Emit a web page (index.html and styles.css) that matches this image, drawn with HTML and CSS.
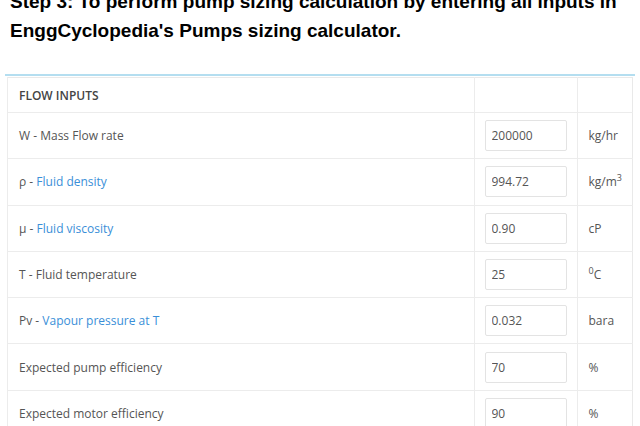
FILE: index.html
```html
<!DOCTYPE html>
<html lang="en">
  <head>
    <meta charset="UTF-8" />
    <title>Pump sizing inputs</title>
    <link rel="stylesheet" href="styles.css">
  </head>
  <body>
    <h2 class="step-title">Step 3: To perform pump sizing calculation by entering all inputs in EnggCyclopedia's Pumps sizing calculator.</h2>

    <div class="calc">
      <table class="inputs">
        <tr class="head">
          <td class="label">FLOW INPUTS</td>
          <td class="field"></td>
          <td class="unit"></td>
        </tr>
        <tr>
          <td class="label">W - Mass Flow rate</td>
          <td class="field"><input type="text" value="200000"></td>
          <td class="unit">kg/hr</td>
        </tr>
        <tr>
          <td class="label">ρ - <a href="#">Fluid density</a></td>
          <td class="field"><input type="text" value="994.72"></td>
          <td class="unit">kg/m<sup>3</sup></td>
        </tr>
        <tr>
          <td class="label">μ - <a href="#">Fluid viscosity</a></td>
          <td class="field"><input type="text" value="0.90"></td>
          <td class="unit">cP</td>
        </tr>
        <tr>
          <td class="label">T - Fluid temperature</td>
          <td class="field"><input type="text" value="25"></td>
          <td class="unit"><sup>0</sup>C</td>
        </tr>
        <tr>
          <td class="label">Pv - <a href="#">Vapour pressure at T</a></td>
          <td class="field"><input type="text" value="0.032"></td>
          <td class="unit">bara</td>
        </tr>
        <tr>
          <td class="label">Expected pump efficiency</td>
          <td class="field"><input type="text" value="70"></td>
          <td class="unit">%</td>
        </tr>
        <tr>
          <td class="label">Expected motor efficiency</td>
          <td class="field"><input type="text" value="90"></td>
          <td class="unit">%</td>
        </tr>
      </table>
    </div>
  </body>
</html>
```

FILE: styles.css
```css
body {
  margin: 0;
  padding: 0;
  background-color: #fff;
  font-family: "Open Sans", sans-serif;
  color: #555;
  overflow: hidden;
}

/* Heading copied from the article */
.step-title {
  margin: -13px 0 0 10px;
  font-family: "Liberation Sans", Arial, sans-serif;
  font-size: 19px;
  font-weight: 700;
  line-height: 29px;
  color: #000;
}

/* Calculator box */
.calc {
  margin: 29px 5px 0 5px;
  padding: 1px 2px 0 2px;
  border-top: 2px solid #b4def0;
}

.inputs {
  width: 626px;
  border-collapse: collapse;
  border: 1px solid #e9e9e9;
  font-size: 12px;
}

.inputs td {
  border-top: 1px solid #ececec;
  border-left: 1px solid #ececec;
  padding: 0 10px;
  height: 45.3px;
}

.inputs .label {
  width: 446px;
  padding-left: 11px;
}

.inputs .field {
  width: 83px;
}

.inputs .unit {
  width: 33px;
}

.inputs .head td {
  height: 34px;
  border-top: none;
}

.head .label {
  font-weight: 600;
  color: #444;
}

.inputs a {
  color: #3a8fd8;
  text-decoration: none;
}

.inputs input {
  box-sizing: border-box;
  width: 82px;
  height: 31px;
  padding: 0 6px;
  border: 1px solid #e3e3e3;
  border-radius: 2px;
  font-family: "Open Sans", sans-serif;
  font-size: 12px;
  color: #555;
  vertical-align: middle;
}

.unit sup {
  font-size: 9px;
  line-height: 0;
}
```
